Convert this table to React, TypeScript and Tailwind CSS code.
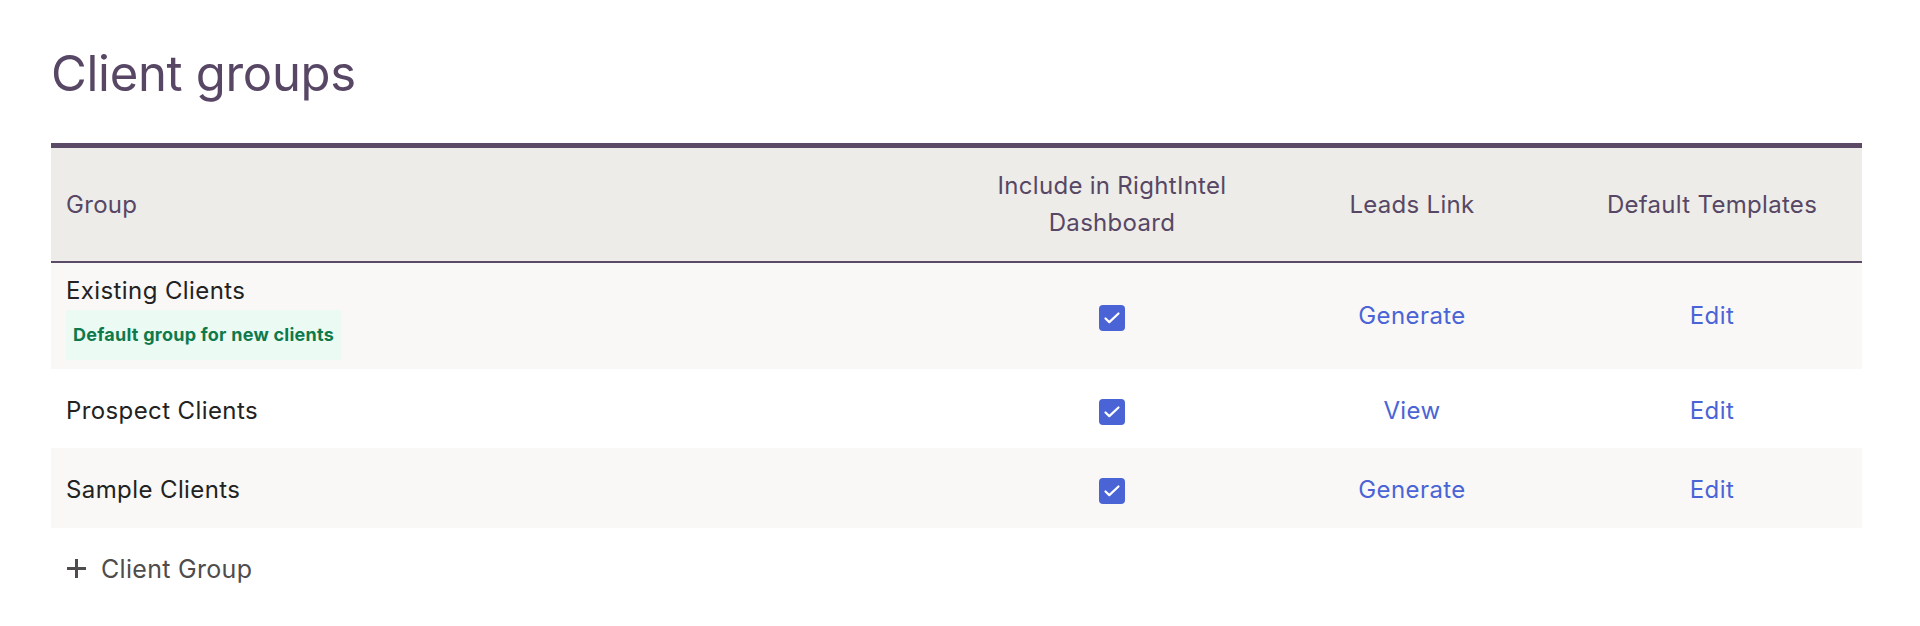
import React from "react";

const rows = [
  { name: "Existing Clients", badge: true, link: "Generate", bg: "bg-[#f9f8f6]", h: "h-[107px]", pt: "", first: "pt-[5px]", cb: "pt-[11px]" },
  { name: "Prospect Clients", badge: false, link: "View", bg: "bg-white", h: "h-[79px]", pt: "pt-[5px]", first: "pt-[5px]", cb: "pt-[13px]" },
  { name: "Sample Clients", badge: false, link: "Generate", bg: "bg-[#f9f8f6]", h: "h-[80px]", pt: "pt-[5px]", first: "pt-[5px]", cb: "pt-[13px]" },
];

function Check() {
  return (
    <span className="inline-flex h-[26px] w-[26px] items-center justify-center rounded-[4px] bg-[#4a64d6]">
      <svg width="26" height="26" viewBox="0 0 26 26" fill="none">
        <path d="M6.5 13.5l3.8 3.6L19.5 8.5" stroke="white" strokeWidth="2.2" strokeLinecap="round" strokeLinejoin="round" />
      </svg>
    </span>
  );
}

export default function App() {
  return (
    <div className="min-h-[626px] bg-white pl-[51px] pt-[44px]" style={{ fontFamily: "Inter, 'Noto Sans', sans-serif" }}>
      <h1 className="text-[49px] leading-[60px] font-normal text-[#574765] tracking-[-0.3px]">Client groups</h1>
      <table className="mt-[39px] w-[1811px] border-collapse table-fixed">
        <colgroup>
          <col className="w-[911px]" />
          <col className="w-[300px]" />
          <col className="w-[300px]" />
          <col className="w-[300px]" />
        </colgroup>
        <thead>
          <tr className="h-[116px] bg-[#edece8] border-t-[5px] border-t-[#5a4a66] border-b-2 border-b-[#5a4a66] text-[24px] leading-[37px] tracking-[0.3px] text-[#574765]">
            <th className="pl-[15px] text-left font-normal">Group</th>
            <th className="px-[15px] text-center font-normal">Include in RightIntel Dashboard</th>
            <th className="px-[15px] text-center font-normal">Leads Link</th>
            <th className="px-[15px] text-center font-normal">Default Templates</th>
          </tr>
        </thead>
        <tbody>
          {rows.map((r) => (
            <tr key={r.name} className={`${r.bg} ${r.h}`}>
              <td className={`pl-[15px] align-middle ${r.first}`}>
                <div className="text-[24px] leading-[30px] tracking-[0.4px] text-[#222222]">{r.name}</div>
                {r.badge && (
                  <div className="mt-[4px] inline-block rounded-[2px] bg-[#ebfaf2] px-[7px] py-[14px] text-[18px] leading-[22px] font-bold tracking-[0.25px] text-[#0e7a4c]">
                    Default group for new clients
                  </div>
                )}
              </td>
              <td className="text-center align-middle">
                <span className={`inline-flex ${r.cb}`}><Check /></span>
              </td>
              <td className={`text-center align-middle text-[24px] tracking-[0.4px] text-[#4a64d6] ${r.pt}`}>{r.link}</td>
              <td className={`text-center align-middle text-[24px] tracking-[0.4px] text-[#4a64d6] ${r.pt}`}>Edit</td>
            </tr>
          ))}
        </tbody>
      </table>
      <button className="mt-[23px] flex items-center gap-[14px] pl-[15px] text-[25px] leading-[36px] tracking-[0.3px] text-[#4f4c4c]">
        <svg width="21" height="21" viewBox="0 0 21 21">
          <path d="M10.5 1v19M1 10.5h19" stroke="#4f4c4c" strokeWidth="3" />
        </svg>
        Client Group
      </button>
    </div>
  );
}
